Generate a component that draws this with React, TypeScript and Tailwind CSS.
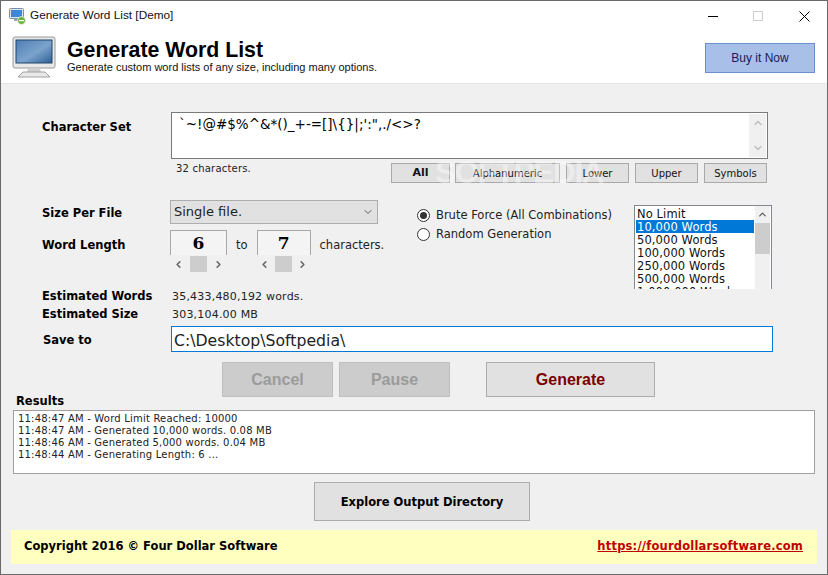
import { ChevronDown, ChevronLeft, ChevronRight, ChevronUp } from 'lucide-react';

const verdana = 'font-["DejaVu_Sans",sans-serif]';

function MonitorLogo() {
  return (
    <svg width="44" height="42" viewBox="0 0 44 42">
      <defs>
        <linearGradient id="scr" x1="0" y1="0" x2="1" y2="1">
          <stop offset="0" stopColor="#4f7fb5" />
          <stop offset="0.55" stopColor="#7ba3cc" />
          <stop offset="1" stopColor="#2f5f96" />
        </linearGradient>
      </defs>
      <rect x="1" y="1" width="42" height="31" rx="2" fill="#e8e8e8" stroke="#9a9a9a" />
      <rect x="4" y="4" width="36" height="23" fill="url(#scr)" stroke="#1f4468" />
      <path d="M16 32h12l1 4H15z" fill="#cfcfcf" />
      <path d="M6 41l5-5h22l5 5z" fill="#e8e8e8" stroke="#a0a0a0" />
    </svg>
  );
}

function AppIcon() {
  return (
    <svg width="17" height="17" viewBox="0 0 17 17">
      <rect x="0.5" y="0.5" width="14" height="10" rx="1" fill="#dbe6f2" stroke="#7c8ea3" />
      <rect x="2" y="2" width="11" height="7" fill="#3f87d6" />
      <rect x="5" y="11" width="6" height="2" fill="#9aa5b1" />
      <circle cx="12.5" cy="12.5" r="4" fill="#6db33f" stroke="#fff" strokeWidth="0.7" />
      <rect x="10" y="12" width="5" height="1.2" fill="#fff" />
    </svg>
  );
}

function SetButton({ label, width, bold }: { label: string; width: string; bold?: boolean }) {
  return (
    <button className={`${width} h-5 border border-[#a9a9a9] bg-[#e1e1e1] text-[#111] ${bold ? 'text-[11px] font-bold' : 'text-[10px]'}`}>
      {label}
    </button>
  );
}

function Spinner({ value, boxWidth, gap }: { value: string; boxWidth: string; gap: string }) {
  return (
    <div className={`flex shrink-0 flex-col items-center ${boxWidth}`}>
      <div className={`flex h-[25px] w-full items-center justify-center border border-b-0 border-[#a8a8a8] bg-[#f4f4f4] pt-[2px] text-[17px] font-bold font-["DejaVu_Serif",serif]`}>
        {value}
      </div>
      <div className={`mt-px flex h-4 items-center ${gap} text-[#666]`}>
        <ChevronLeft size={11} strokeWidth={3.5} />
        <div className="h-4 w-[17px] bg-[#cdcdcd]" />
        <ChevronRight size={11} strokeWidth={3.5} />
      </div>
    </div>
  );
}

function Radio({ label, checked }: { label: string; checked?: boolean }) {
  return (
    <div className="flex h-[19px] items-center gap-[6px]">
      <span className="flex h-[13px] w-[13px] items-center justify-center rounded-full border border-[#333] bg-white">
        {checked && <span className="h-[7px] w-[7px] rounded-full bg-[#333]" />}
      </span>
      <span className="text-[11.5px] text-[#222]">{label}</span>
    </div>
  );
}

function ActionButton({ label, width, active }: { label: string; width: string; active?: boolean }) {
  return (
    <button
      className={`${width} h-[35px] border font-["Liberation_Sans",sans-serif] text-[16px] font-bold ${
        active ? 'border-[#adadad] bg-[#e1e1e1] text-[#7a0000]' : 'border-[#bfbfbf] bg-[#cccccc] text-[#9b9b9b]'
      }`}
    >
      {label}
    </button>
  );
}

const listItems = ['No Limit', '10,000 Words', '50,000 Words', '100,000 Words', '250,000 Words', '500,000 Words', '1,000,000 Words'];

const logLines = [
  '11:48:47 AM - Word Limit Reached: 10000',
  '11:48:47 AM - Generated 10,000 words. 0.08 MB',
  '11:48:46 AM - Generated 5,000 words. 0.04 MB',
  '11:48:44 AM - Generating Length: 6 ...',
];

export default function App() {
  return (
    <div className={`flex h-[575px] w-[828px] flex-col overflow-hidden border border-[#6a6a6a] bg-[#f0f0f0] ${verdana} text-[11px] text-black`}>
      {/* title bar */}
      <div className="flex h-[30px] shrink-0 items-center bg-white pl-2">
        <AppIcon />
        <span className={`ml-[4px] font-["Liberation_Sans",sans-serif] text-[11.8px] text-[#111]`}>Generate Word List [Demo]</span>
        <div className="ml-auto flex items-center">
          <div className="mr-[35px] h-px w-[10px] bg-black" />
          <div className="mr-[36px] h-[10px] w-[10px] border border-[#cccccc]" />
          <svg width="11" height="11" viewBox="0 0 11 11" className="mr-[17px]">
            <path d="M0.5 0.5l10 10M10.5 0.5l-10 10" stroke="#000" strokeWidth="1" fill="none" />
          </svg>
        </div>
      </div>

      {/* header */}
      <div className="flex h-[53px] shrink-0 items-start border-b border-[#e6e6e6] bg-white pl-[11px]">
        <div className="mt-[5px]"><MonitorLogo /></div>
        <div className={`ml-[11px] mt-[8px] font-["Liberation_Sans",sans-serif]`}>
          <div className="text-[21.3px] font-bold leading-[22px]">Generate Word List</div>
          <div className="text-[11px] leading-[13px] text-[#111]">Generate custom word lists of any size, including many options.</div>
        </div>
        <button className={`ml-auto mr-[12px] mt-[12px] h-[30px] w-[110px] border border-[#6c8fd4] bg-[#a8bfe8] font-["Liberation_Sans",sans-serif] text-[12px] text-[#1a1a5a]`}>
          Buy it Now
        </button>
      </div>

      {/* form */}
      <div className="relative flex flex-1 flex-col">
        <div className={`pointer-events-none absolute left-[434px] top-[73px] font-["Liberation_Sans",sans-serif] text-[31px] font-bold leading-[31px] tracking-[-1px] text-white/40`}>SOFTPEDIA</div>

        <div className="ml-[41px] mr-[59px] mt-[28px] flex">
          <div className="mt-[7px] w-[129px] text-[11.5px] font-bold">Character Set</div>
          <div className="flex h-[47px] flex-1 border border-[#7a7a7a] bg-white">
            <div className="flex-1 pl-[7px] pt-[1px] text-[13.5px]">`~!@#$%^&amp;*()_+-=[]\{'{'}{'}'}|;':",./&lt;&gt;?</div>
            <div className="my-px mr-px flex w-[17px] flex-col items-center justify-between bg-[#f0f0f0] py-[3px] text-[#c0c0c0]">
              <ChevronUp size={12} strokeWidth={3} />
              <ChevronDown size={12} strokeWidth={3} />
            </div>
          </div>
        </div>

        <div className="mr-[60px] mt-[4px] flex pl-[175px]">
          <span className="-mt-[2px] text-[10px] tracking-[0.2px] text-[#222]">32 characters.</span>
          <div className="ml-auto flex">
            <SetButton label="All" width="w-[59px]" bold />
            <div className="ml-[5px]"><SetButton label="Alphanumeric" width="w-[105px]" /></div>
            <div className="ml-[6px]"><SetButton label="Lower" width="w-[63px]" /></div>
            <div className="ml-[6px]"><SetButton label="Upper" width="w-[63px]" /></div>
            <div className="ml-[6px]"><SetButton label="Symbols" width="w-[63px]" /></div>
          </div>
        </div>

        <div className="ml-[41px] mt-[17px] flex h-[89px]">
          <div className="w-[337px] shrink-0">
            <div className="flex items-center">
              <span className="w-[128px] shrink-0 pt-[3px] text-[11.5px] font-bold">Size Per File</span>
              <div className="flex h-[24px] w-[208px] shrink-0 items-center justify-between border border-[#adadad] bg-[#e1e1e1] pl-[3px] pr-[3px] text-[13px] text-[#222]">
                Single file.
                <ChevronDown size={12} strokeWidth={1.5} className="text-[#333]" />
              </div>
            </div>
            <div className="mt-[6px] flex items-start whitespace-nowrap">
              <span className="mt-[7px] w-[128px] shrink-0 text-[11.5px] font-bold">Word Length</span>
              <Spinner value="6" boxWidth="w-[57px]" gap="gap-[6px]" />
              <span className="ml-[9px] mr-[9px] mt-[7px] text-[11.5px] text-[#222]">to</span>
              <Spinner value="7" boxWidth="w-[54px]" gap="gap-[5px]" />
              <span className="ml-[9px] mt-[7px] text-[11.5px] text-[#222]">characters.</span>
            </div>
          </div>
          <div className="ml-[38px] mt-[6px] w-[217px] shrink-0">
            <Radio label="Brute Force (All Combinations)" checked />
            <Radio label="Random Generation" />
          </div>
          <div className="mt-[5px] flex h-[84px] w-[138px] shrink-0 overflow-hidden border border-b-0 border-[#828790] bg-white">
            <div className="flex-1 py-px pl-px pr-px text-[11.5px] leading-[15px] text-[#111]">
              {listItems.map((item, i) => (
                <div key={item} className={`h-[13px] whitespace-nowrap pl-px tracking-[0.1px] ${i === 1 ? 'bg-[#0078d7] text-white' : ''}`}>{item}</div>
              ))}
            </div>
            <div className="mr-px flex w-[15px] flex-col items-center bg-[#f0f0f0] text-[#555]">
              <ChevronUp size={11} strokeWidth={2.5} className="my-[3px]" />
              <div className="h-[31px] w-full bg-[#cdcdcd]" />
              <ChevronDown size={11} strokeWidth={2.5} className="-mb-[9px] mt-auto" />
            </div>
          </div>
        </div>

        <div className="ml-[41px] -mt-px flex h-[18px] items-center">
          <span className="w-[129px] text-[11.5px] font-bold">Estimated Words</span>
          <span className="ml-[1px] tracking-[0.2px] text-[#222]">35,433,480,192 words.</span>
        </div>
        <div className="ml-[41px] flex h-[18px] items-center">
          <span className="w-[129px] text-[11.5px] font-bold">Estimated Size</span>
          <span className="ml-[1px] tracking-[0.2px] text-[#222]">303,104.00 MB</span>
        </div>
        <div className="ml-[42px] mt-[2px] flex items-center">
          <span className="w-[128px] pt-[4px] text-[11.5px] font-bold">Save to</span>
          <div className="flex h-[26px] w-[602px] items-center border border-[#0078d7] bg-white pl-[2px] pt-[3px] text-[15.7px] text-[#222]">C:\Desktop\Softpedia\</div>
        </div>

        <div className="ml-[221px] mt-[10px] flex">
          <ActionButton label="Cancel" width="w-[111px]" />
          <div className="ml-[6px]"><ActionButton label="Pause" width="w-[111px]" /></div>
          <div className="ml-[36px]"><ActionButton label="Generate" width="w-[169px]" active /></div>
        </div>

        <div className="ml-[15px] -mt-[2px] h-[12px] text-[11.5px] font-bold leading-[12px]">Results</div>
        <div className="ml-[12px] mt-[3px] h-[64px] w-[802px] border border-[#a0a0a0] bg-white px-[4px] pt-[2px] text-[10px] leading-[12px] tracking-[0.2px] text-[#222]">
          {logLines.map((line, i) => <div key={i}>{line}</div>)}
        </div>

        <div className="mt-[8px] flex justify-center pl-[16px]">
          <button className="h-[39px] w-[216px] border border-[#adadad] bg-[#e1e1e1] pt-[3px] text-[11.5px] font-bold">Explore Output Directory</button>
        </div>

        <div className="mx-[10px] mt-[9px] flex h-[34px] items-center justify-between bg-[#ffffc0] pl-[13px] pr-[14px] text-[11.5px] font-bold">
          <span>Copyright 2016 © Four Dollar Software</span>
          <span className="tracking-[0.2px] text-[#c00000] underline">https://fourdollarsoftware.com</span>
        </div>
      </div>
    </div>
  );
}
